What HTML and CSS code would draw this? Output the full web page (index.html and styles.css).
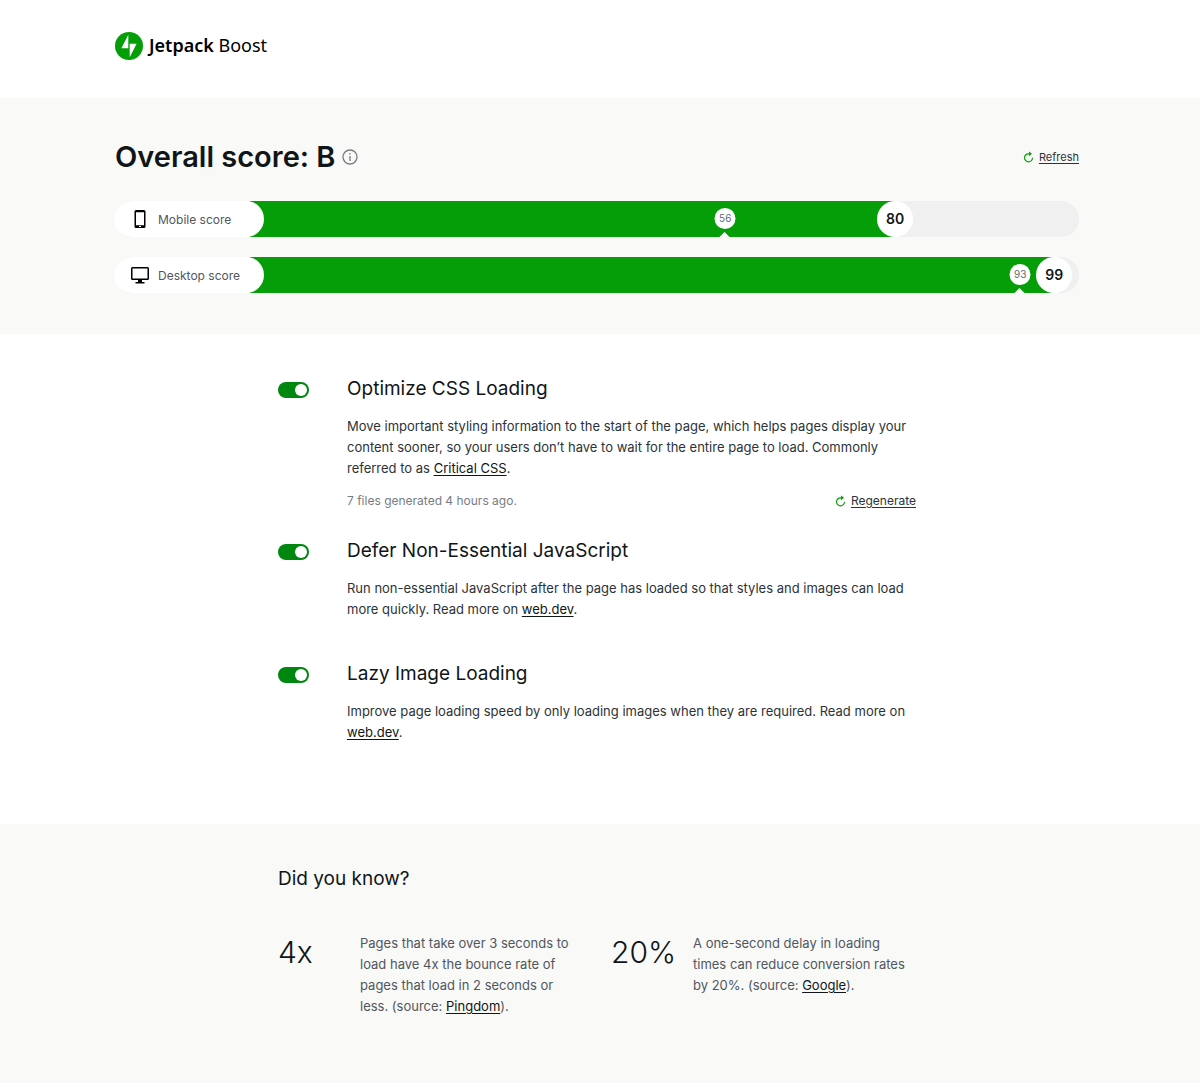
FILE: index.html
```html
<!DOCTYPE html>
<html lang="en">
<head>
<meta charset="utf-8">
<meta name="viewport" content="width=device-width, initial-scale=1">
<title>Jetpack Boost</title>
<link rel="stylesheet" href="styles.css">
</head>
<body>
<svg class="sprite" aria-hidden="true">
  <symbol id="refresh" viewBox="0 0 12 12">
    <path d="M6.600 2.800H5.500A4 4 0 1 0 9.500 6.800" fill="none" stroke="currentColor" stroke-width="1.200"/>
    <path d="M6 .5 9 2.800 6 5.200z" fill="currentColor"/>
  </symbol>
</svg>

<header class="header">
  <div class="container logo">
    <svg class="logo-mark" viewBox="0 0 32 32" aria-hidden="true">
      <circle cx="16" cy="16" r="16" fill="#069e08"/>
      <path d="M15.200 18.700H7.300l7.900-15.500zM16.800 28.800V13.300h7.900z" fill="#fff"/>
    </svg>
    <span class="logo-text"><strong>Jetpack</strong> Boost</span>
  </div>
</header>

<main>
  <section class="scores">
    <div class="container">
      <div class="scores-head">
        <h1>Overall score: B</h1>
        <button class="info" type="button" aria-label="About the score">
          <svg viewBox="0 0 16 16" aria-hidden="true"><circle cx="8" cy="8" r="7" fill="none" stroke="currentColor" stroke-width="1.300"/><path d="M8 7v5M8 4v1.600" stroke="currentColor" stroke-width="1.300"/></svg>
        </button>
        <button class="action action-small" type="button"><svg aria-hidden="true"><use href="#refresh"/></svg><span>Refresh</span></button>
      </div>

      <div class="bar">
        <div class="bar-fill" style="width: 82.8%"><span class="bar-score">80</span></div>
        <div class="bar-label">
          <svg viewBox="0 0 20 20" aria-hidden="true"><path fill-rule="evenodd" d="M6 1h8q1.500 0 1.500 1.500v15q0 1.500-1.500 1.500H6q-1.500 0-1.500-1.500v-15Q4.500 1 6 1zM6 3.200v13h8v-13zM9 17h2v1H9z"/></svg>
          <span>Mobile score</span>
        </div>
        <div class="bar-mark" style="left: 63.3%">56</div>
      </div>

      <div class="bar">
        <div class="bar-fill" style="width: 99.3%"><span class="bar-score">99</span></div>
        <div class="bar-label">
          <svg viewBox="0 0 20 20" aria-hidden="true"><path fill-rule="evenodd" d="M2.500 2h15Q19 2 19 3.500v10q0 1.500-1.500 1.500H12v2h2.500v1.500h-9V17H8v-2H2.500Q1 15 1 13.500v-10Q1 2 2.500 2zM2.500 3.500v10h15v-10z"/></svg>
          <span>Desktop score</span>
        </div>
        <div class="bar-mark" style="left: 93.9%">93</div>
      </div>
    </div>
  </section>

  <section class="features">
    <div class="feature">
      <input class="toggle" type="checkbox" id="css" checked>
      <div class="feature-body">
        <h2><label for="css">Optimize CSS Loading</label></h2>
        <p>Move important styling information to the start of the page, which helps pages display your content sooner, so your users don’t have to wait for the entire page to load. Commonly referred to as <a href="#">Critical CSS</a>.</p>
        <div class="status">
          <span>7 files generated 4 hours ago.</span>
          <button class="action" type="button"><svg aria-hidden="true"><use href="#refresh"/></svg><span>Regenerate</span></button>
        </div>
      </div>
    </div>
    <div class="feature">
      <input class="toggle" type="checkbox" id="defer" checked>
      <div class="feature-body">
        <h2><label for="defer">Defer Non-Essential JavaScript</label></h2>
        <p>Run non-essential JavaScript after the page has loaded so that styles and images can load more quickly. Read more on <a href="#">web.dev</a>.</p>
      </div>
    </div>
    <div class="feature">
      <input class="toggle" type="checkbox" id="lazy" checked>
      <div class="feature-body">
        <h2><label for="lazy">Lazy Image Loading</label></h2>
        <p>Improve page loading speed by only loading images when they are required. Read more on <a href="#">web.dev</a>.</p>
      </div>
    </div>
  </section>
</main>

<footer class="tips">
  <div class="tips-inner">
    <h2>Did you know?</h2>
    <div class="tips-grid">
      <div class="tip">
        <div class="tip-number">4x</div>
        <p>Pages that take over 3 seconds to load have 4x the bounce rate of pages that load in 2 seconds or less. (source: <a href="#">Pingdom</a>).</p>
      </div>
      <div class="tip">
        <div class="tip-number">20%</div>
        <p>A one-second delay in loading times can reduce conversion rates by 20%. (source: <a href="#">Google</a>).</p>
      </div>
    </div>
  </div>
</footer>
</body>
</html>
```
FILE: styles.css
```css
* { box-sizing: border-box; }

body {
  margin: 0;
  background: #fff;
  color: #2c3338;
  font: 400 13px/21px Inter, "Liberation Sans", sans-serif;
}

h1, h2, p { margin: 0; }
a { color: #101517; text-underline-offset: 2px; }
button {
  padding: 0;
  border: 0;
  background: none;
  color: inherit;
  font: inherit;
  cursor: pointer;
}

.sprite { position: absolute; width: 0; height: 0; }

.header, .scores, .features, .tips { padding-left: 20px; padding-right: 26px; }
.container { max-width: 964px; margin: 0 auto; }

.header { padding-top: 32px; padding-bottom: 38px; }
.logo { display: flex; gap: 6px; }
.logo-mark { width: 28px; height: 28px; }
.logo-text { color: #000; font: 400 18px/26px "Noto Sans", sans-serif; }
.logo-text strong { font-weight: 600; }

.scores { padding-top: 39px; padding-bottom: 41px; background: #f9f9f7; }
.scores-head { display: flex; align-items: center; margin-bottom: 24px; }
h1 { color: #101517; font-size: 29px; line-height: 40px; font-weight: 600; }
.info { width: 16px; height: 16px; margin-left: 7px; color: #787c82; }
.info svg { display: block; }

.action { display: flex; align-items: center; gap: 4px; font-size: 12px; }
.action svg { width: 12px; height: 12px; color: #069e08; }
.action span { text-decoration: underline; text-underline-offset: 2px; }
.action-small { margin-left: auto; font-size: 11px; }

.bar {
  position: relative;
  height: 36px;
  border-radius: 18px;
  background: #f0f0f0;
}
.bar + .bar { margin-top: 20px; }
.bar-fill {
  display: flex;
  justify-content: flex-end;
  height: 36px;
  /* The green stops under the middle of the score circle. */
  background: linear-gradient(#069e08, #069e08) no-repeat 0 0 / calc(100% - 18px) 100%;
  border-radius: 18px 0 0 18px;
}
.bar-label {
  position: absolute;
  top: 0;
  left: 0;
  display: flex;
  align-items: center;
  gap: 8px;
  width: 149px;
  height: 36px;
  padding-left: 15px;
  border-radius: 18px;
  background: #fff;
  /* Covers the antialiased rim of the fill at the rounded end. */
  box-shadow: -1px 0 0 #fff;
  color: #50575e;
  font-size: 12px;
}
.bar-label svg { width: 20px; height: 20px; fill: #000; }
.bar-score {
  width: 36px;
  border-radius: 50%;
  background: #fff;
  color: #101517;
  font-size: 14px;
  line-height: 36px;
  font-weight: 600;
  text-align: center;
}
.bar-mark {
  position: absolute;
  top: 7px;
  width: 21px;
  height: 21px;
  border-radius: 50%;
  background: #fff;
  color: #646970;
  font-size: 10px;
  line-height: 21px;
  text-align: center;
  transform: translateX(-50%);
}
.bar-mark::after {
  content: "";
  position: absolute;
  top: 24px;
  left: 5px;
  border: solid transparent;
  border-width: 0 5px 5px;
  border-bottom-color: #fff;
}

.features { padding-top: 40px; padding-bottom: 81px; }
.feature {
  display: grid;
  grid-template-columns: 69px 1fr;
  max-width: 638px;
  margin: 0 auto;
}
.feature + .feature { margin-top: 39px; }
.feature:nth-child(2) { margin-top: 25px; }
h2 { color: #101517; font-size: 19px; line-height: 30px; font-weight: 400; }
.feature p { margin-top: 12px; }

.toggle {
  appearance: none;
  display: flex;
  align-items: center;
  width: 31px;
  height: 16px;
  margin: 8px 0 0;
  padding: 0 2px;
  border-radius: 8px;
  background: #a7aaad;
  cursor: pointer;
}
.toggle::before {
  content: "";
  width: 12px;
  height: 12px;
  border-radius: 50%;
  background: #fff;
}
.toggle:checked { justify-content: flex-end; background: #008710; }

.status {
  display: flex;
  justify-content: space-between;
  margin-top: 11px;
  color: #787c82;
  font-size: 12px;
}
.status .action { color: #2c3338; }

.tips { padding-top: 40px; padding-bottom: 66px; background: #f9f9f7; }
.tips-inner { max-width: 638px; margin: 0 auto; }
.tips-grid {
  display: grid;
  grid-template-columns: 1fr 1fr;
  gap: 28px;
  margin-top: 39px;
  color: #50575e;
}
.tip { display: grid; grid-template-columns: 82px 1fr; }
.tip p { padding-right: 8px; }
.tip-number { color: #101517; font-size: 30px; line-height: 38px; font-weight: 300; }

@media (max-width: 640px) {
  .tips-grid { grid-template-columns: 1fr; }
}
```
